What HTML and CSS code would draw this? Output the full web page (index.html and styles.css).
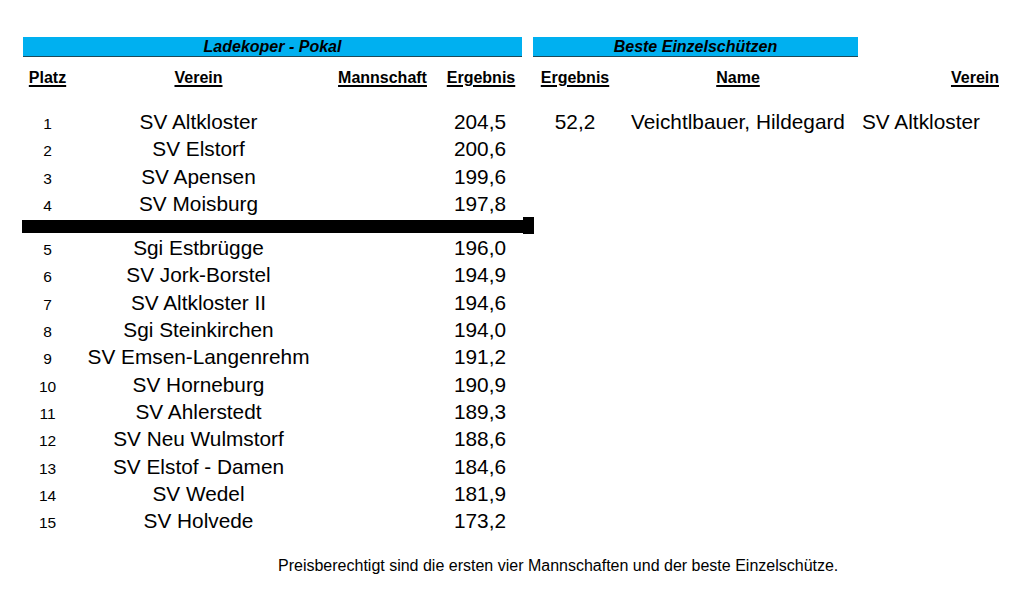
FILE: index.html
```html
<!DOCTYPE html>
<html lang="de">
<head>
<meta charset="utf-8">
<title>Ladekoper - Pokal</title>
<link rel="stylesheet" href="styles.css">
</head>
<body>
<div class="page">
  <div class="tables">
    <section class="left">
      <div class="bar">Ladekoper - Pokal</div>
      <div class="head grid-left">
        <span>Platz</span>
        <span>Verein</span>
        <span>Mannschaft</span>
        <span>Ergebnis</span>
      </div>
      <div class="rows first">
        <div class="row grid-left"><span class="pl">1</span><span class="club">SV Altkloster</span><span></span><span class="res">204,5</span></div>
        <div class="row grid-left"><span class="pl">2</span><span class="club">SV Elstorf</span><span></span><span class="res">200,6</span></div>
        <div class="row grid-left"><span class="pl">3</span><span class="club">SV Apensen</span><span></span><span class="res">199,6</span></div>
        <div class="row grid-left"><span class="pl">4</span><span class="club">SV Moisburg</span><span></span><span class="res">197,8</span></div>
      </div>
      <div class="sep"><div class="sep-main"></div><div class="sep-cap"></div></div>
      <div class="rows">
        <div class="row grid-left"><span class="pl">5</span><span class="club">Sgi Estbrügge</span><span></span><span class="res">196,0</span></div>
        <div class="row grid-left"><span class="pl">6</span><span class="club">SV Jork-Borstel</span><span></span><span class="res">194,9</span></div>
        <div class="row grid-left"><span class="pl">7</span><span class="club">SV Altkloster II</span><span></span><span class="res">194,6</span></div>
        <div class="row grid-left"><span class="pl">8</span><span class="club">Sgi Steinkirchen</span><span></span><span class="res">194,0</span></div>
        <div class="row grid-left"><span class="pl">9</span><span class="club">SV Emsen-Langenrehm</span><span></span><span class="res">191,2</span></div>
        <div class="row grid-left"><span class="pl">10</span><span class="club">SV Horneburg</span><span></span><span class="res">190,9</span></div>
        <div class="row grid-left"><span class="pl">11</span><span class="club">SV Ahlerstedt</span><span></span><span class="res">189,3</span></div>
        <div class="row grid-left"><span class="pl">12</span><span class="club">SV Neu Wulmstorf</span><span></span><span class="res">188,6</span></div>
        <div class="row grid-left"><span class="pl">13</span><span class="club">SV Elstof - Damen</span><span></span><span class="res">184,6</span></div>
        <div class="row grid-left"><span class="pl">14</span><span class="club">SV Wedel</span><span></span><span class="res">181,9</span></div>
        <div class="row grid-left"><span class="pl">15</span><span class="club">SV Holvede</span><span></span><span class="res">173,2</span></div>
      </div>
    </section>
    <section class="right">
      <div class="bar bar-right">Beste Einzelschützen</div>
      <div class="head grid-right">
        <span>Ergebnis</span>
        <span>Name</span>
        <span class="r-verein">Verein</span>
      </div>
      <div class="rows first">
        <div class="row grid-right"><span class="center">52,2</span><span class="center">Veichtlbauer, Hildegard</span><span class="r-club">SV Altkloster</span></div>
      </div>
    </section>
  </div>
  <p class="footer">Preisberechtigt sind die ersten vier Mannschaften und der beste Einzelschütze.</p>
</div>
</body>
</html>
```

FILE: styles.css
```css
html, body {
  margin: 0;
  padding: 0;
  background: #ffffff;
}

body {
  font-family: "Liberation Sans", Arial, sans-serif;
  color: #000000;
}

.page {
  padding: 37px 0 0 23px;
}

.tables {
  display: flex;
  align-items: flex-start;
  gap: 11px;
}

.left {
  width: 499px;
}

.right {
  width: 467px;
}

.bar {
  height: 19px;
  line-height: 19px;
  background: #00b0f0;
  border-bottom: 1.5px solid #1d4a5a;
  font-size: 16px;
  font-weight: bold;
  font-style: italic;
  text-align: center;
}

.bar-right {
  width: 325px;
}

.grid-left {
  display: grid;
  grid-template-columns: 49px 253px 115px 82px;
}

.grid-right {
  display: grid;
  grid-template-columns: 84px 242px 141px;
}

.head {
  margin-top: 10px;
  height: 22px;
  line-height: 22px;
  font-size: 16px;
  font-weight: bold;
  text-align: center;
}

.head span {
  text-decoration: underline;
  text-decoration-thickness: 1.5px;
  text-underline-offset: 2px;
}

.head .r-verein {
  text-align: right;
  padding-right: 1px;
}

.rows.first {
  margin-top: 19px;
}

.row {
  height: 27.3px;
  align-items: baseline;
  font-size: 20.8px;
  line-height: 27.3px;
}

.row .pl {
  font-size: 15.5px;
  line-height: 20px;
  text-align: center;
}

.row .club,
.row .center {
  text-align: center;
  white-space: nowrap;
}

.row .res {
  text-align: right;
  padding-right: 16px;
}

.row .r-club {
  padding-left: 3px;
  white-space: nowrap;
}

.sep {
  display: flex;
  align-items: flex-start;
  width: 512px;
  margin-left: -1px;
  height: 17px;
}

.sep-main {
  flex: 1;
  height: 13px;
  margin-top: 3px;
  background: #000000;
}

.sep-cap {
  width: 11px;
  height: 17px;
  background: #000000;
}

.footer {
  margin: 23px 0 0 0;
  padding-left: 255px;
  font-size: 16px;
  line-height: 18px;
}
```
